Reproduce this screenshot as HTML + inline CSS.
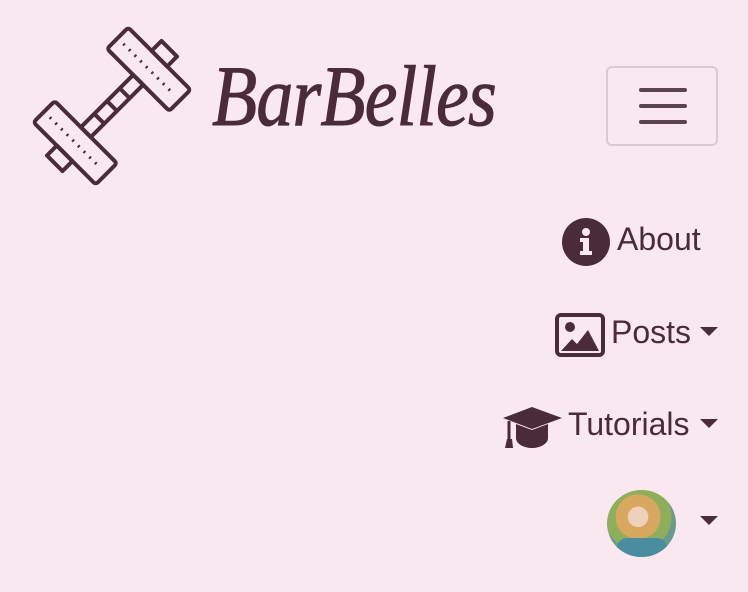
<!DOCTYPE html>
<html><head><meta charset="utf-8"><style>
html,body{margin:0;padding:0;width:748px;height:592px;background:#fae8f1;overflow:hidden;font-family:"Liberation Sans",sans-serif;color:#4a2c38}
.abs{position:absolute}
.brand{left:212px;top:46px;font-family:"Liberation Serif",serif;font-style:italic;font-size:86px;letter-spacing:-1px;color:#4a2c38;transform:scaleX(0.86);transform-origin:left;-webkit-text-stroke:1px #4a2c38}
.tog{left:606px;top:66px;width:112px;height:80px;border:2px solid #ddc8d2;border-radius:6px;box-sizing:border-box}
.tog i{position:absolute;left:31px;width:48px;height:4px;background:#5a4450;border-radius:2px}
.nav{font-size:32px}
.car{position:absolute;width:0;height:0;border-left:9px solid transparent;border-right:9px solid transparent;border-top:9px solid #4a2c38}
</style></head><body>
<svg class="abs" style="left:0;top:0" width="220" height="200" viewBox="0 0 220 200">
<g transform="rotate(-45 112 106)" fill="none" stroke="#4a2c38" stroke-width="4" stroke-linejoin="round">
<rect x="31" y="95" width="14" height="22"/>
<rect x="45" y="62" width="30" height="88" rx="3"/>
<line x1="60" y1="70" x2="60" y2="142" stroke-dasharray="2 6" stroke-width="3"/>
<rect x="75" y="99" width="74" height="14"/>
<line x1="94" y1="99" x2="94" y2="113"/><line x1="112" y1="99" x2="112" y2="113"/><line x1="130" y1="99" x2="130" y2="113"/>
<rect x="149" y="62" width="30" height="88" rx="3"/>
<line x1="164" y1="70" x2="164" y2="142" stroke-dasharray="2 6" stroke-width="3"/>
<rect x="179" y="95" width="14" height="22"/>
</g></svg>
<div class="abs brand">BarBelles</div>
<div class="abs tog"><i style="top:20px"></i><i style="top:36px"></i><i style="top:52px"></i></div>

<svg class="abs" style="left:562px;top:218px" width="48" height="48"><circle cx="24" cy="24" r="24" fill="#4a2c38"/><circle cx="24" cy="14" r="4" fill="#fae8f1"/><path d="M18 20h9v13h3v4H18v-4h3v-9h-3z" fill="#fae8f1"/></svg>
<div class="abs nav" style="left:617px;top:221px">About</div>

<svg class="abs" style="left:555px;top:313px" width="50" height="44"><rect x="2" y="2" width="46" height="40" rx="4" fill="none" stroke="#4a2c38" stroke-width="4"/><circle cx="15" cy="14" r="5" fill="#4a2c38"/><path d="M6 38l11-12 5 5 11-14 11 21z" fill="#4a2c38"/></svg>
<div class="abs nav" style="left:611px;top:314px">Posts</div>
<div class="car" style="left:700px;top:327px"></div>

<svg class="abs" style="left:501px;top:405px" width="62" height="46" viewBox="0 0 62 46"><path d="M2 13L31 2l30 11-30 11z" fill="#4a2c38"/><path d="M15 19v14c0 6 8 10 16 10s16-4 16-10V19l-16 6z" fill="#4a2c38"/><path d="M8 16v18" stroke="#4a2c38" stroke-width="3"/><path d="M6 34h5l1 9H4z" fill="#4a2c38"/></svg>
<div class="abs nav" style="left:568px;top:406px">Tutorials</div>
<div class="car" style="left:700px;top:419px"></div>

<div class="abs" style="left:607px;top:490px;width:69px;height:67px;border-radius:50%;background:radial-gradient(circle at 45% 40%,#f0d0b8 0 18%,#d8a860 19% 40%,#8fae5c 41% 60%,#6a9a8c 61%);overflow:hidden"><div style="position:absolute;left:10px;top:48px;width:50px;height:20px;background:#4a8ca0;border-radius:10px 10px 0 0"></div></div>
<div class="car" style="left:700px;top:516px"></div>
</body></html>
